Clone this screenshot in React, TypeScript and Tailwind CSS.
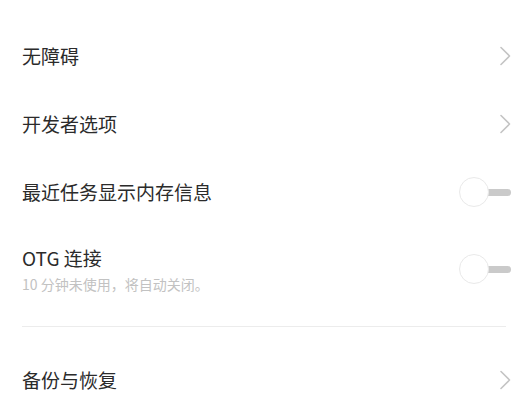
import React from "react";

const font = { fontFamily: '"Noto Sans CJK SC", "Noto Sans", sans-serif' };

function Chevron() {
  return (
    <svg width="12" height="20" viewBox="0 0 12 20" className="shrink-0">
      <path d="M2 1.5 L10.5 10 L2 18.5" fill="none" stroke="#c4c4c4" strokeWidth="1.6" strokeLinecap="round" strokeLinejoin="round" />
    </svg>
  );
}

function Toggle() {
  return (
    <div className="relative w-[52px] h-[30px] shrink-0">
      <div className="absolute right-0 top-[12px] w-[36px] h-[7px] rounded-full bg-[#cacaca]" />
      <div className="absolute left-0 top-0 w-[30px] h-[30px] rounded-full bg-white border border-[#e9e9e9]" />
    </div>
  );
}

function Row({ title, right }: { title: string; right: React.ReactNode }) {
  return (
    <div className="flex items-center justify-between h-[68px] pl-[22px] pr-[17px]">
      <span className="text-[19px] leading-[26px] text-[#2b2b2b]">{title}</span>
      {right}
    </div>
  );
}

export default function App() {
  return (
    <div className="w-[528px] h-[400px] bg-white overflow-hidden pt-[22px]" style={font}>
      <Row title="无障碍" right={<Chevron />} />
      <Row title="开发者选项" right={<Chevron />} />
      <Row title="最近任务显示内存信息" right={<Toggle />} />
      <div className="flex items-center justify-between h-[86px] pl-[22px] pr-[17px]">
        <div className="flex flex-col">
          <span className="text-[19px] leading-[26px] text-[#2b2b2b]">OTG 连接</span>
          <span className="text-[14px] leading-[20px] mt-[3px] text-[#c2c2c2]">10 分钟未使用，将自动关闭。</span>
        </div>
        <Toggle />
      </div>
      <div className="mx-[22px] mt-[14px] h-px bg-[#ececec]" />
      <div className="h-[19px]" />
      <Row title="备份与恢复" right={<Chevron />} />
    </div>
  );
}
